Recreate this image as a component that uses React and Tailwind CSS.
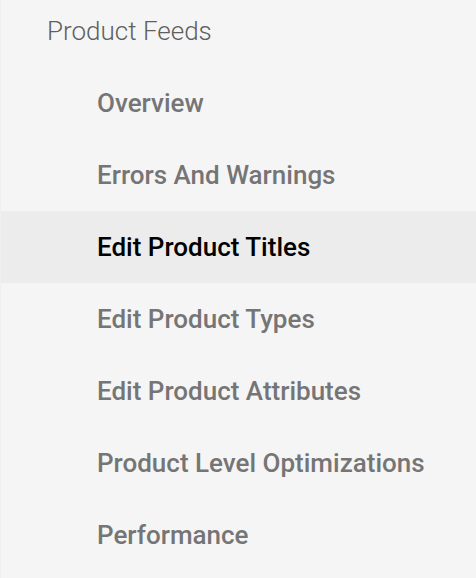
import React from 'react';

const items = [
  'Overview',
  'Errors And Warnings',
  'Edit Product Titles',
  'Edit Product Types',
  'Edit Product Attributes',
  'Product Level Optimizations',
  'Performance',
];

export default function App() {
  const active = 'Edit Product Titles';

  return (
    <div className="min-h-screen w-full bg-[#f5f5f5] border-l border-[#f0f0f0] font-['Roboto',sans-serif]">
      <div className="pl-[46px] pt-[13px] h-[67px] text-[26px] font-light text-[#5f5f5f] leading-[36px]">
        Product Feeds
      </div>
      <nav className="flex flex-col">
        {items.map((item) => (
          <div
            key={item}
            className={
              item === active
                ? 'h-[72px] flex items-center pl-[96px] text-[26px] font-medium text-black bg-[#ececec]'
                : 'h-[72px] flex items-center pl-[96px] text-[26px] font-medium text-[#757575]'
            }
          >
            {item}
          </div>
        ))}
      </nav>
    </div>
  );
}
